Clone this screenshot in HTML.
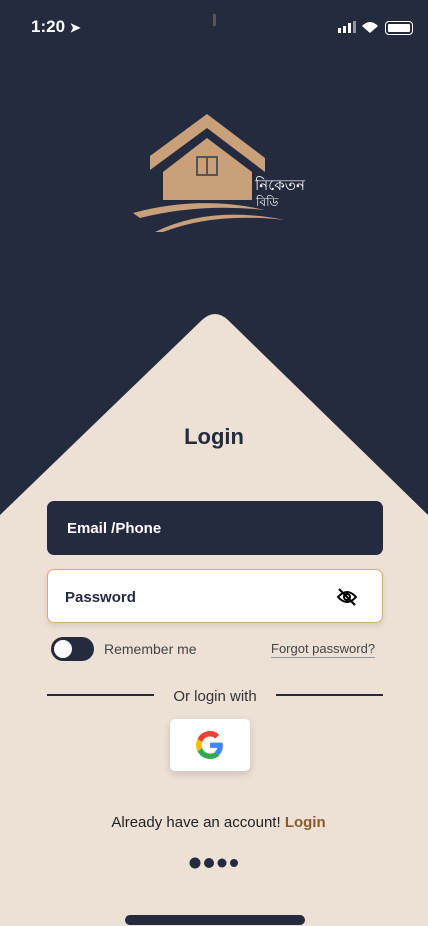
<!DOCTYPE html><html><head><style>
body{margin:0;width:428px;height:926px;overflow:hidden;background:#252b3f;font-family:"Liberation Sans",sans-serif;position:relative}
.a{position:absolute}
</style></head><body>
<svg class="a" style="left:0;top:0" width="428" height="926">
<path d="M0 515 L202 320 Q215 308 228 320 L428 515 L428 926 L0 926Z" fill="#ede1d6"/>
<g fill="#c9a07a">
<path d="M150 156 L207 114 L265 158 L265 172 L207 128 L150 170Z"/>
<path d="M163 172 L207 138 L252 172 L252 200 L163 200Z"/>
<path d="M133 213 Q200 195 265 210 Q200 203 140 218Z"/>
<path d="M155 232 Q210 205 285 220 Q215 212 163 232Z"/>
</g>
<rect x="197" y="157" width="20" height="18" fill="none" stroke="#555" stroke-width="2"/>
<line x1="207" y1="157" x2="207" y2="175" stroke="#555" stroke-width="2"/>
<text x="255" y="190" fill="#fff" font-size="15" font-family="Noto Sans CJK SC,sans-serif">নিকেতন</text>
<text x="256" y="206" fill="#fff" font-size="12">বিডি</text>
<rect x="213" y="14" width="3" height="12" fill="#555"/>
<g fill="#fff"><rect x="338" y="28" width="3" height="5"/><rect x="343" y="26" width="3" height="7"/><rect x="348" y="23" width="3" height="10"/><rect x="353" y="21" width="3" height="12" opacity=".5"/></g>
<path d="M362 26 Q370 18 378 26 L370 33Z" fill="#fff"/>
</svg>
<div class="a" style="left:31px;top:17px;color:#fff;font-size:17px;font-weight:bold">1:20 <span style="font-size:13px">➤</span></div>
<div class="a" style="left:385px;top:21px;width:28px;height:14px;border:1px solid #fff;border-radius:4px;padding:2px;box-sizing:border-box"><div style="background:#fff;height:100%;border-radius:1px"></div></div>
<div class="a" style="left:0;width:428px;top:424px;text-align:center;font-size:22px;font-weight:bold;color:#252b3f">Login</div>
<div class="a" style="left:47px;top:501px;width:336px;height:54px;background:#252b3f;border-radius:7px;color:#fff;font-weight:bold;font-size:15px;line-height:56px;padding-left:20px;box-sizing:border-box">Email /Phone</div>
<div class="a" style="left:47px;top:569px;width:336px;height:54px;background:#fff;border:1.5px solid #d4aa82;border-radius:7px;color:#252b3f;font-weight:bold;font-size:15px;line-height:56px;padding-left:17px;box-sizing:border-box;box-shadow:0 3px 6px rgba(0,0,0,.1)">Password
<svg class="a" style="left:288px;top:17px" width="22" height="20" viewBox="0 0 22 20"><path d="M2 10 Q11 0 20 10 Q11 20 2 10Z" fill="none" stroke="#000" stroke-width="2"/><circle cx="11" cy="10" r="3" fill="none" stroke="#000" stroke-width="2"/><line x1="3" y1="2" x2="19" y2="18" stroke="#000" stroke-width="2"/></svg></div>
<div class="a" style="left:51px;top:637px;width:43px;height:24px;background:#252b3f;border-radius:12px"><div style="position:absolute;left:3px;top:3px;width:18px;height:18px;border-radius:50%;background:#fff"></div></div>
<div class="a" style="left:104px;top:641px;font-size:14px;color:#444">Remember me</div>
<div class="a" style="left:271px;top:641px;font-size:13px;color:#444;border-bottom:1.5px solid #999;line-height:16px">Forgot password?</div>
<div class="a" style="left:47px;top:694px;width:107px;height:1.5px;background:#252b3f"></div>
<div class="a" style="left:276px;top:694px;width:107px;height:1.5px;background:#252b3f"></div>
<div class="a" style="left:0;width:430px;top:688px;text-align:center;font-size:15px;color:#333">Or login with</div>
<div class="a" style="left:170px;top:719px;width:80px;height:52px;background:#fff;border-radius:5px;box-shadow:0 3px 8px rgba(0,0,0,.15)">
<svg style="position:absolute;left:26px;top:12px" width="28" height="28" viewBox="0 0 48 48"><path fill="#EA4335" d="M24 9.5c3.5 0 6.6 1.2 9 3.5l6.7-6.7C35.6 2.4 30.2 0 24 0 14.6 0 6.6 5.4 2.7 13.2l7.8 6.1C12.4 13.6 17.7 9.5 24 9.5z"/><path fill="#4285F4" d="M46.1 24.5c0-1.6-.1-3.1-.4-4.5H24v9h12.4c-.5 2.9-2.2 5.3-4.6 7l7.5 5.8c4.4-4 6.8-10 6.8-17.3z"/><path fill="#FBBC05" d="M10.5 28.7c-.5-1.4-.8-3-.8-4.7s.3-3.2.8-4.7l-7.8-6.1C1 16.6 0 20.2 0 24s1 7.4 2.7 10.8l7.8-6.1z"/><path fill="#34A853" d="M24 48c6.5 0 11.9-2.1 15.9-5.8l-7.5-5.8c-2.1 1.4-4.8 2.3-8.4 2.3-6.3 0-11.6-4.1-13.5-9.8l-7.8 6.1C6.6 42.6 14.6 48 24 48z"/></svg></div>
<div class="a" style="left:0;width:437px;top:814px;text-align:center;font-size:15px;color:#222">Already have an account! <b style="color:#8a5a2b">Login</b></div>
<svg class="a" style="left:188px;top:856px" width="54" height="14"><circle cx="7" cy="7" r="5.5" fill="#252b3f"/><circle cx="21" cy="7" r="5" fill="#252b3f"/><circle cx="34" cy="7" r="4.5" fill="#252b3f"/><circle cx="46" cy="7" r="4" fill="#252b3f"/></svg>
<div class="a" style="left:125px;top:915px;width:180px;height:10px;background:#252b3f;border-radius:5px"></div>
</body></html>
